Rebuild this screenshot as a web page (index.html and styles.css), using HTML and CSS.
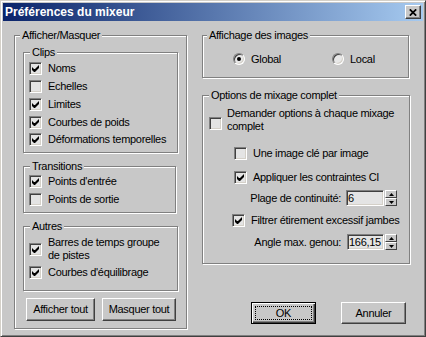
FILE: index.html
```html
<!DOCTYPE html>
<html lang="fr">
<head>
    <meta charset="UTF-8">
    <title>Préférences du mixeur</title>
    <link rel="stylesheet" href="styles.css">
</head>
<body>
<div class="window">
    <div class="titlebar">
        <span class="title">Préférences du mixeur</span>
        <button class="close">
            <svg width="8" height="7" viewBox="0 0 8 7"><path d="M0.8 0.3 L7.2 6.7 M7.2 0.3 L0.8 6.7" stroke="#000" stroke-width="1.7" fill="none"/></svg>
        </button>
    </div>

    <div class="main">
        <!-- left column -->
        <fieldset class="group show-hide">
            <legend>Afficher/Masquer</legend>

            <fieldset class="group clips">
                <legend>Clips</legend>
                <label class="check"><span class="box"><svg width="9" height="9" viewBox="0 0 9 9"><polygon points="1,3 3,5 4,5 8,1 8,4 4,8 3,8 1,6"/></svg></span>Noms</label>
                <label class="check"><span class="box"></span>Echelles</label>
                <label class="check"><span class="box"><svg width="9" height="9" viewBox="0 0 9 9"><polygon points="1,3 3,5 4,5 8,1 8,4 4,8 3,8 1,6"/></svg></span>Limites</label>
                <label class="check"><span class="box"><svg width="9" height="9" viewBox="0 0 9 9"><polygon points="1,3 3,5 4,5 8,1 8,4 4,8 3,8 1,6"/></svg></span>Courbes de poids</label>
                <label class="check"><span class="box"><svg width="9" height="9" viewBox="0 0 9 9"><polygon points="1,3 3,5 4,5 8,1 8,4 4,8 3,8 1,6"/></svg></span>Déformations temporelles</label>
            </fieldset>

            <fieldset class="group transitions">
                <legend>Transitions</legend>
                <label class="check"><span class="box"><svg width="9" height="9" viewBox="0 0 9 9"><polygon points="1,3 3,5 4,5 8,1 8,4 4,8 3,8 1,6"/></svg></span>Points d'entrée</label>
                <label class="check"><span class="box"></span>Points de sortie</label>
            </fieldset>

            <fieldset class="group others">
                <legend>Autres</legend>
                <label class="check two-lines"><span class="box"><svg width="9" height="9" viewBox="0 0 9 9"><polygon points="1,3 3,5 4,5 8,1 8,4 4,8 3,8 1,6"/></svg></span><span>Barres de temps groupe<br>de pistes</span></label>
                <label class="check balance"><span class="box"><svg width="9" height="9" viewBox="0 0 9 9"><polygon points="1,3 3,5 4,5 8,1 8,4 4,8 3,8 1,6"/></svg></span>Courbes d'équilibrage</label>
            </fieldset>

            <div class="btn-row">
                <button class="btn show-all">Afficher tout</button>
                <button class="btn hide-all">Masquer tout</button>
            </div>
        </fieldset>

        <!-- right column -->
        <div class="right-col">
            <fieldset class="group images">
                <legend>Affichage des images</legend>
                <div class="radios">
                    <label class="radio global"><span class="ring"><span class="dot"></span></span>Global</label>
                    <label class="radio"><span class="ring"></span>Local</label>
                </div>
            </fieldset>

            <fieldset class="group mix">
                <legend>Options de mixage complet</legend>
                <label class="check ask"><span class="box"></span><span>Demander options à chaque mixage<br>complet</span></label>
                <label class="check indent key"><span class="box"></span>Une image clé par image</label>
                <label class="check indent apply"><span class="box"><svg width="9" height="9" viewBox="0 0 9 9"><polygon points="1,3 3,5 4,5 8,1 8,4 4,8 3,8 1,6"/></svg></span>Appliquer les contraintes CI</label>
                <div class="spin-row range">
                    <span>Plage de continuité:</span>
                    <input class="field" type="text" value="6">
                    <span class="spinner"><span class="arrow"><svg width="5" height="3" viewBox="0 0 5 3"><polygon points="2.5,0 5,3 0,3"/></svg></span><span class="arrow"><svg width="5" height="3" viewBox="0 0 5 3"><polygon points="0,0 5,0 2.5,3"/></svg></span></span>
                </div>
                <label class="check stretch"><span class="box"><svg width="9" height="9" viewBox="0 0 9 9"><polygon points="1,3 3,5 4,5 8,1 8,4 4,8 3,8 1,6"/></svg></span>Filtrer étirement excessif jambes</label>
                <div class="spin-row knee">
                    <span>Angle max. genou:</span>
                    <input class="field narrow" type="text" value="166,15">
                    <span class="spinner"><span class="arrow"><svg width="5" height="3" viewBox="0 0 5 3"><polygon points="2.5,0 5,3 0,3"/></svg></span><span class="arrow"><svg width="5" height="3" viewBox="0 0 5 3"><polygon points="0,0 5,0 2.5,3"/></svg></span></span>
                </div>
            </fieldset>

            <div class="dlg-buttons">
                <button class="btn default"><span class="focus">OK</span></button>
                <button class="btn">Annuler</button>
            </div>
        </div>
    </div>
</div>
</body>
</html>
```

FILE: styles.css
```css
/* dialog look: classic windows */
body {
    margin: 0;
    font-family: "Liberation Sans", Arial, sans-serif;
    font-size: 11px;
    line-height: 13px;
    letter-spacing: -0.3px;
    color: #000;
}

.window {
    width: 426px;
    height: 337px;
    box-sizing: border-box;
    background: #c8c8c8;
    border: 1px solid;
    border-color: #d4d0c8 #404040 #404040 #d4d0c8;
    box-shadow: inset 1px 1px 0 #fff, inset -1px -1px 0 #808080;
    padding: 2px;
}

.titlebar {
    height: 18px;
    display: flex;
    align-items: center;
    padding-left: 2px;
    background: linear-gradient(to right, #0a246a, #a6caf0);
}

.title {
    color: #fff;
    font-weight: bold;
    font-size: 12px;
    letter-spacing: 0;
}

.close {
    margin-left: auto;
    margin-right: 2px;
    width: 16px;
    height: 14px;
    padding: 0;
    box-sizing: border-box;
    background: #c8c8c8;
    border: 1px solid;
    border-color: #fff #404040 #404040 #fff;
    box-shadow: inset -1px -1px 0 #808080;
    display: flex;
    align-items: center;
    justify-content: center;
}

.main {
    display: flex;
    gap: 15px;
    padding: 8px 0 0 11px;
}

/* group boxes */
fieldset.group {
    margin: 0;
    padding: 0;
    min-width: 0;
    box-sizing: border-box;
    border: 1px solid #808080;
    box-shadow: inset 1px 1px 0 #fff, 1px 1px 0 #fff;
}

fieldset.group legend {
    padding: 0 2px;
    margin-left: 5px;
    line-height: 13px;
    background: #c8c8c8;
}

.show-hide {
    width: 173px;
}

.clips, .transitions, .others {
    margin-left: 8px !important;
}

.clips {
    width: 155px;
    margin-top: 4px !important;
    padding: 1px 0 3.25px !important;
}

.clips legend, .transitions legend, .others legend {
    margin-left: 6px !important;
}

.transitions {
    width: 153px;
    margin-top: 7px !important;
    padding: 0 0 3.5px !important;
}

.others {
    width: 155px;
    margin-top: 7px !important;
    padding: 3px 0 8.25px !important;
}

/* checkboxes */
.check {
    display: flex;
    align-items: center;
    height: 17.75px;
    margin-left: 5px;
}

.box {
    flex: none;
    width: 13px;
    height: 13px;
    box-sizing: border-box;
    padding: 1px;
    margin-right: 6px;
    background: #e4e4e4;
    border: 1px solid;
    border-color: #808080 #fff #fff #808080;
    box-shadow: inset 1px 1px 0 #404040, inset -1px -1px 0 #d4d0c8;
}

.box svg {
    display: block;
    fill: #000;
}

.check.two-lines {
    height: 26px;
}

.check.balance {
    margin-top: 2px;
}

/* buttons */
.btn {
    font: inherit;
    letter-spacing: inherit;
    color: #000;
    height: 23px;
    padding: 0;
    box-sizing: border-box;
    background: #c8c8c8;
    border: 1px solid;
    border-color: #fff #404040 #404040 #fff;
    box-shadow: inset -1px -1px 0 #808080;
}

.btn-row {
    display: flex;
    gap: 7px;
    margin: 7px 0 7px 11px;
}

.show-all {
    width: 69px;
}

.hide-all {
    width: 74px;
}

/* right side */
.right-col {
    width: 208px;
    display: flex;
    flex-direction: column;
}

.images {
    width: 207px;
}

.images legend {
    margin-left: 4px !important;
}

.radios {
    display: flex;
    height: 14px;
    padding: 10px 0 11px 30px;
}

.radio {
    display: flex;
    align-items: center;
}

.radio.global {
    width: 99px;
}

.ring {
    flex: none;
    width: 12px;
    height: 12px;
    box-sizing: border-box;
    margin-right: 6px;
    border-radius: 50%;
    background: #e8e8e8;
    border: 1px solid;
    border-color: #808080 #fff #fff #808080;
    box-shadow: inset 1px 1px 0 #404040, inset -1px -1px 0 #d4d0c8;
    display: flex;
    align-items: center;
    justify-content: center;
}

.dot {
    width: 4px;
    height: 4px;
    border-radius: 50%;
    background: #000;
}

.mix {
    width: 208px;
    margin-top: 11px !important;
    padding-bottom: 13px !important;
}

.mix legend {
    margin-left: 6px !important;
}

.check.ask {
    height: 26px;
    margin-top: 5px;
    margin-left: 6px;
    align-items: flex-start;
}

.check.ask .box {
    margin-top: 10px;
    margin-right: 5px;
}

.check.indent {
    height: 18px;
    margin-left: 31px;
}

.check.key {
    margin-top: 11px;
}

.check.apply {
    margin-top: 6px;
}

.check.stretch {
    height: 18px;
    margin-top: 5px;
    margin-left: 29px;
}

.spin-row {
    display: flex;
    align-items: center;
    justify-content: flex-end;
    height: 16px;
    margin-right: 12px;
}

.spin-row.range {
    margin-top: 4px;
}

.spin-row.knee {
    margin-top: 5px;
}

.field {
    font: inherit;
    letter-spacing: inherit;
    width: 38px;
    height: 16px;
    box-sizing: border-box;
    margin: 0 1px 0 5px;
    padding: 0 1px;
    background: #e4e4e4;
    border: 1px solid;
    border-color: #808080 #fff #fff #808080;
    box-shadow: inset 1px 1px 0 #404040, inset -1px -1px 0 #d4d0c8;
    outline: none;
}

.field.narrow {
    width: 37px;
    margin-left: 6px;
}

.spinner {
    display: flex;
    flex-direction: column;
    width: 12px;
    height: 16px;
}

.arrow {
    height: 8px;
    box-sizing: border-box;
    background: #c8c8c8;
    border: 1px solid;
    border-color: #fff #404040 #404040 #fff;
    display: flex;
    align-items: center;
    justify-content: center;
}

.arrow svg {
    display: block;
    fill: #000;
}

.dlg-buttons {
    display: flex;
    justify-content: flex-end;
    gap: 25px;
    margin: 38px 4px 0 0;
}

.dlg-buttons .btn {
    width: 65px;
    height: 22px;
}

.btn.default {
    border: 1px solid #000;
    box-shadow: inset 1px 1px 0 #fff, inset -1px -1px 0 #404040, inset -2px -2px 0 #808080;
    padding: 3px;
    display: flex;
}

.focus {
    flex: 1;
    border: 1px dotted #000;
    display: flex;
    align-items: center;
    justify-content: center;
}
```
